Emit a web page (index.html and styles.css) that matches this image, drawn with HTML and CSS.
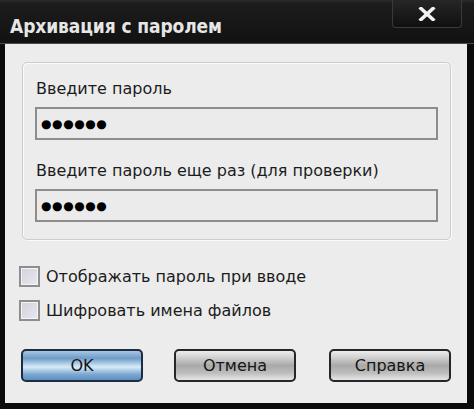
FILE: index.html
```html
<!DOCTYPE html>
<html lang="ru">
<head>
<meta charset="utf-8">
<title>Архивация с паролем</title>
<link rel="stylesheet" href="styles.css">
</head>
<body>
<div class="window">
  <div class="titlebar">
    <div class="title">Архивация с паролем</div>
    <div class="close">
      <svg width="18" height="14" viewBox="0 0 18 14"><path d="M3 1.5 L15 12.5 M15 1.5 L3 12.5" stroke="#f2f2f2" stroke-width="3.6" stroke-linecap="square"/></svg>
    </div>
  </div>
  <div class="client">
    <div class="group">
      <div class="label">Введите пароль</div>
      <div class="field"><span class="dots">●●●●●●</span></div>
      <div class="label second">Введите пароль еще раз (для проверки)</div>
      <div class="field"><span class="dots">●●●●●●</span></div>
    </div>
    <div class="checks">
      <label class="check"><span class="box"></span><span>Отображать пароль при вводе</span></label>
      <label class="check"><span class="box"></span><span>Шифровать имена файлов</span></label>
    </div>
    <div class="buttons">
      <div class="btn ok">OK</div>
      <div class="btn">Отмена</div>
      <div class="btn">Справка</div>
    </div>
  </div>
</div>
</body>
</html>
```

FILE: styles.css
```css
html, body {
  margin: 0;
  padding: 0;
  background: #000;
}
.window {
  width: 474px;
  height: 409px;
  background: #0b0b0b;
  display: flex;
  flex-direction: column;
  font-family: "DejaVu Sans", sans-serif;
  overflow: hidden;
}
.titlebar {
  height: 43px;
  flex: none;
  display: flex;
  justify-content: space-between;
  align-items: flex-start;
  padding: 0 12px 0 10px;
  background: linear-gradient(#2a2a2a 0px, #1c1c1c 4px, #151515 30px, #121212 42px);
  border-bottom: 1px solid #4b4b4b;
  box-sizing: content-box;
}
.title {
  margin-top: 15px;
  font-family: "DejaVu Sans Condensed", "DejaVu Sans", sans-serif;
  font-weight: bold;
  font-size: 19px;
  line-height: 22px;
  color: #e6e6e6;
  letter-spacing: -0.1px;
}
.close {
  width: 70px;
  height: 28px;
  box-sizing: border-box;
  background: linear-gradient(#262626, #101010);
  border: 1px solid #3a3a3a;
  border-top: none;
  border-radius: 0 0 4px 4px;
  display: flex;
  align-items: center;
  justify-content: center;
}
.client {
  flex: 1;
  margin: 0 7px 6px 5px;
  background: #ececec;
  display: flex;
  flex-direction: column;
  color: #1c1c1c;
  font-size: 16px;
}
.group {
  margin: 18px 16px 0 17px;
  height: 178px;
  box-sizing: border-box;
  border: 1px solid #cdcdcd;
  box-shadow: inset 1px 1px 0 #fafafa, 1px 1px 0 #fafafa;
  border-radius: 5px;
  padding: 16px 12px 0 12px;
  display: flex;
  flex-direction: column;
}
.label {
  height: 20px;
  line-height: 20px;
  margin-left: 1px;
}
.label.second {
  margin-top: 21px;
}
.field {
  margin-top: 8px;
  height: 33px;
  box-sizing: border-box;
  border: 2px solid #8d8d8d;
  background: #ebebeb;
  display: flex;
  align-items: center;
  padding-left: 4px;
}
.dots {
  font-size: 12px;
  letter-spacing: 0.6px;
  color: #000;
}
.checks {
  margin: 26px 0 0 14px;
  display: flex;
  flex-direction: column;
  gap: 13px;
}
.check {
  display: flex;
  align-items: center;
  gap: 6px;
  height: 21px;
}
.box {
  width: 21px;
  height: 21px;
  box-sizing: border-box;
  border: 2px solid #8e8e8e;
  background: linear-gradient(135deg, #d2d2dc, #e8e8f2);
  box-shadow: inset 0 0 0 1px #f4f4f4;
}
.buttons {
  margin: 28px 0 0 16px;
  display: flex;
  gap: 31px;
}
.btn {
  width: 122px;
  height: 33px;
  box-sizing: border-box;
  border: 2px solid #262626;
  border-radius: 5px;
  display: flex;
  align-items: center;
  justify-content: center;
  font-size: 16px;
  color: #151515;
  background: linear-gradient(#ededed 0%, #d4d4d4 20%, #a9a9a9 50%, #bcbcbc 75%, #e6e6e6 100%);
}
.btn.ok {
  border-color: #1d2c40;
  background: linear-gradient(#a9c6e2 0%, #6e9cc8 25%, #d8ecf8 55%, #7ea9d2 80%, #5b8ec0 100%);
}
.btn + .btn + .btn {
  margin-left: 2px;
}
```
